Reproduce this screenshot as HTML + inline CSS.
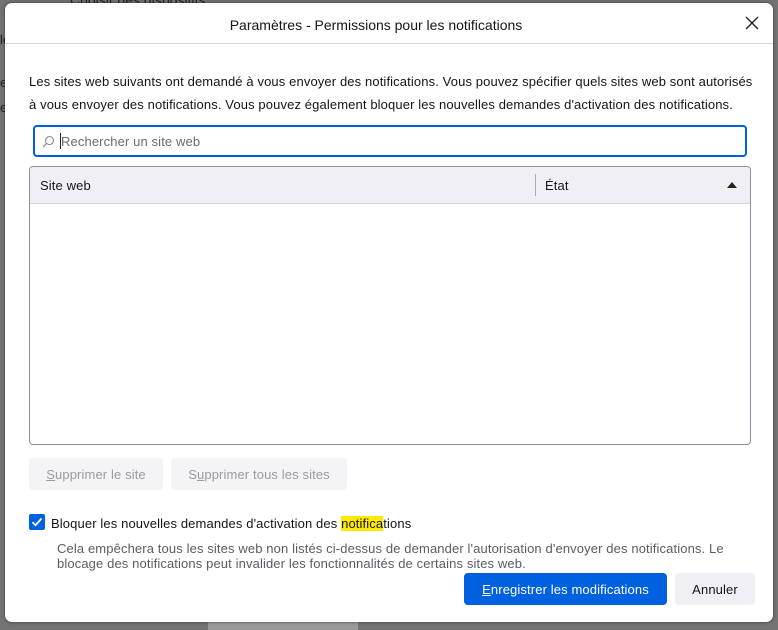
<!DOCTYPE html>
<html><head><meta charset="utf-8"><style>
*{box-sizing:border-box;margin:0;padding:0}
body{width:778px;height:630px;background:#737373;position:relative;overflow:hidden;font-family:"Liberation Sans",sans-serif;font-size:13px;color:#15141a}
.a{position:absolute;white-space:nowrap}
#dlg{position:absolute;left:5px;top:3px;width:768px;height:619px;background:#fff;border-radius:7px;box-shadow:0 0 3px rgba(0,0,0,.5)}
.btn{position:absolute;height:32px;border-radius:4px;line-height:34px;text-align:center}
.t{font-size:13px;letter-spacing:0.12px}
</style></head><body>
<div class="a" style="left:70px;top:-8px;color:#222;font-size:14px">Choisir des dispositifs…</div>
<div class="a" style="left:0;top:32px;color:#222">le</div>
<div class="a" style="left:0;top:75px;color:#222">e</div>
<div class="a" style="left:0;top:100px;color:#222">e</div>
<div class="a" style="left:208px;top:620px;width:150px;height:10px;background:#999"></div>
<div id="dlg">
 <div class="a" style="left:0;top:14px;width:742px;text-align:center;font-size:14px">Paramètres - Permissions pour les notifications</div>
 <svg class="a" style="left:740px;top:13px" width="14" height="14" viewBox="0 0 14 14"><path d="M1 1L13 13M13 1L1 13" stroke="#222" stroke-width="1.4"/></svg>
 <div class="a" style="left:0;top:40px;width:768px;height:1px;background:#d4d4d8"></div>
 <div class="a t" style="left:24px;top:71px">Les sites web suivants ont demandé à vous envoyer des notifications. Vous pouvez spécifier quels sites web sont autorisés</div>
 <div class="a t" style="left:24px;top:94px">à vous envoyer des notifications. Vous pouvez également bloquer les nouvelles demandes d'activation des notifications.</div>
 <div class="a" style="left:28px;top:122px;width:714px;height:32px;border:2px solid #0060df;border-radius:4px"></div>
 <svg class="a" style="left:37px;top:132px" width="13" height="13" viewBox="0 0 13 13"><circle cx="7.5" cy="5.5" r="4" fill="none" stroke="#888" stroke-width="1.1"/><path d="M4.6 8.4L1 12" stroke="#888" stroke-width="1.2"/></svg>
 <div class="a" style="left:55px;top:130px;width:1px;height:16px;background:#222"></div>
 <div class="a t" style="left:56px;top:131px;color:#6b6b70">Rechercher un site web</div>
 <div class="a" style="left:24px;top:163px;width:722px;height:279px;border:1px solid #8f8f9d;border-radius:4px;overflow:hidden">
  <div class="a" style="left:0;top:0;width:720px;height:37px;background:#f0f0f4;border-bottom:1px solid #d4d4d8"></div>
  <div class="a t" style="left:10px;top:11px">Site web</div>
  <div class="a" style="left:505px;top:7px;width:1px;height:22px;background:#aaa"></div>
  <div class="a t" style="left:515px;top:11px">État</div>
  <svg class="a" style="left:697px;top:15px" width="10" height="6"><path d="M0 6L5 0L10 6Z" fill="#222"/></svg>
 </div>
 <div class="btn t" style="left:24px;top:455px;width:134px;background:#f4f4f6;color:#9a9aa0"><u>S</u>upprimer le site</div>
 <div class="btn t" style="left:166px;top:455px;width:176px;background:#f4f4f6;color:#9a9aa0">S<u>u</u>pprimer tous les sites</div>
 <div class="a" style="left:24px;top:511px;width:16px;height:16px;background:#0061e0;border-radius:2px"></div>
 <svg class="a" style="left:24px;top:511px" width="16" height="16"><path d="M3.5 8.2L6.5 11.2L12.5 4.5" stroke="#fff" stroke-width="1.8" fill="none"/></svg>
 <div class="a t" style="left:46px;top:513px">Bloquer les nouvelles demandes d'activation des <span style="background:#ffe900">notifica</span>tions</div>
 <div class="a t" style="left:52px;top:538px;color:#5b5b66;line-height:15px">Cela empêchera tous les sites web non listés ci-dessus de demander l'autorisation d'envoyer des notifications. Le<br>blocage des notifications peut invalider les fonctionnalités de certains sites web.</div>
 <div class="btn t" style="left:459px;top:570px;width:203px;background:#0061e0;color:#fff"><u>E</u>nregistrer les modifications</div>
 <div class="btn t" style="left:670px;top:570px;width:80px;background:#f0f0f4">Annuler</div>
</div>
</body></html>
